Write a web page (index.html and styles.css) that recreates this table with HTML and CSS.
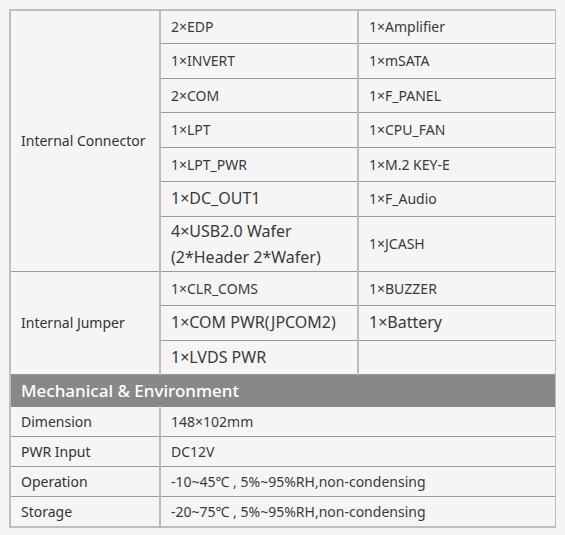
FILE: index.html
```html
<!DOCTYPE html>
<html lang="en">
<head>
<meta charset="utf-8">
<title>Specs</title>
<link rel="stylesheet" href="styles.css">
</head>
<body>
<table class="spec">
  <colgroup>
    <col class="c1"><col class="c2"><col class="c3">
  </colgroup>
  <tbody>
    <tr><td class="label" rowspan="7">Internal Connector</td><td>2×EDP</td><td>1×Amplifier</td></tr>
    <tr><td>1×INVERT</td><td>1×mSATA</td></tr>
    <tr><td>2×COM</td><td>1×F_PANEL</td></tr>
    <tr><td>1×LPT</td><td>1×CPU_FAN</td></tr>
    <tr><td>1×LPT_PWR</td><td>1×M.2 KEY-E</td></tr>
    <tr><td class="big">1×DC_OUT1</td><td>1×F_Audio</td></tr>
    <tr><td class="big tight">4×USB2.0 Wafer<br>(2*Header 2*Wafer)</td><td>1×JCASH</td></tr>
    <tr><td class="label" rowspan="3">Internal Jumper</td><td>1×CLR_COMS</td><td>1×BUZZER</td></tr>
    <tr><td class="big">1×COM PWR(JPCOM2)</td><td class="big">1×Battery</td></tr>
    <tr><td class="big">1×LVDS PWR</td><td></td></tr>
    <tr class="head"><td colspan="3">Mechanical &amp; Environment</td></tr>
    <tr class="low"><td class="label">Dimension</td><td colspan="2">148×102mm</td></tr>
    <tr class="low"><td class="label">PWR Input</td><td colspan="2">DC12V</td></tr>
    <tr class="low"><td class="label">Operation</td><td colspan="2">-10~45℃ , 5%~95%RH,non-condensing</td></tr>
    <tr class="low"><td class="label">Storage</td><td colspan="2">-20~75℃ , 5%~95%RH,non-condensing</td></tr>
  </tbody>
</table>
</body>
</html>
```
FILE: styles.css
```css
html, body {
  background: #f5f5f5;
}
body {
  margin: 9px 9px;
  font-family: "Noto Sans", "Open Sans", sans-serif;
  color: #3a3a3a;
}
.spec {
  border-collapse: collapse;
  width: 548px;
  table-layout: fixed;
  border: 2px solid #bdbdbd;
  background: #f5f5f5;
}
.c1 { width: 150px; }
.c2 { width: 198px; }
.spec td {
  border-left: 2px solid #bdbdbd;
  border-right: 2px solid #bdbdbd;
  border-top: 1px solid #9a9a9a;
  border-bottom: 1px solid #9a9a9a;
  padding: 5px 10px;
  font-size: 14px;
  line-height: 23.5px;
  vertical-align: middle;
  white-space: nowrap;
}
.spec tr:first-child td {
  line-height: 22px;
}
.spec td.big {
  font-size: 16px;
}
.spec td.tight {
  padding: 1px 10px;
  line-height: 26px;
}
.spec td.label {
  color: #333;
}
.spec .head td {
  background: #888888;
  color: #ffffff;
  font-size: 17px;
  font-weight: 500;
  line-height: 22px;
  padding: 5px 10px 4px;
  border-top: 1px solid #888888;
  border-bottom: 1px solid #888888;
}
.spec .low td {
  line-height: 20px;
  padding: 5px 10px 4px;
  font-size: 14px;
}
```
